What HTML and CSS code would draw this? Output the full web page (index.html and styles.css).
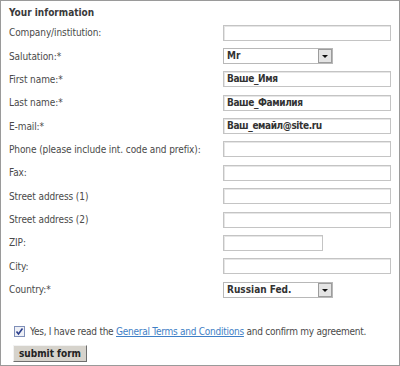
FILE: index.html
```html
<!DOCTYPE html>
<html lang="en">
<head>
    <meta charset="UTF-8">
    <title>Your information</title>
    <link rel="stylesheet" href="styles.css">
</head>
<body>
    <div class="frame">
        <h2>Your information</h2>
        <div class="form">
            <label>Company/institution:</label>
            <span class="field"><span class="box wide"></span></span>

            <label>Salutation:*</label>
            <span class="field"><span class="select">Mr<span class="arrow"></span></span></span>

            <label>First name:*</label>
            <span class="field"><span class="box wide">Ваше_Имя</span></span>

            <label>Last name:*</label>
            <span class="field"><span class="box wide">Ваше_Фамилия</span></span>

            <label>E-mail:*</label>
            <span class="field"><span class="box wide">Ваш_емайл@site.ru</span></span>

            <label>Phone (please include int. code and prefix):</label>
            <span class="field"><span class="box wide"></span></span>

            <label>Fax:</label>
            <span class="field"><span class="box wide"></span></span>

            <label>Street address (1)</label>
            <span class="field"><span class="box wide"></span></span>

            <label>Street address (2)</label>
            <span class="field"><span class="box wide"></span></span>

            <label>ZIP:</label>
            <span class="field"><span class="box short"></span></span>

            <label>City:</label>
            <span class="field"><span class="box wide"></span></span>

            <label>Country:*</label>
            <span class="field"><span class="select">Russian Fed.<span class="arrow"></span></span></span>
        </div>
        <div class="agree">
            <span class="check">
                <svg width="9" height="9" viewBox="0 0 9 9"><path d="M1.5 4.5 L3.5 7 L7.5 1.5" fill="none" stroke="#2c3f8c" stroke-width="1.6"/></svg>
            </span>
            <span>Yes, I have read the <a href="#">General Terms and Conditions</a> and confirm my agreement.</span>
        </div>
        <button class="submit">submit form</button>
    </div>
</body>
</html>
```

FILE: styles.css
```css
/* Page */
body {
    margin: 0;
    background: #ffffff;
    font-family: 'DejaVu Sans Condensed', 'DejaVu Sans', sans-serif;
    font-size: 10px;
    color: #4a4a4a;
}

.frame {
    width: 398px;
    height: 364px;
    border: 1px solid #9a9a9a;
    position: relative;
}

h2 {
    margin: 0;
    padding: 6px 0 0 8px;
    font-size: 10px;
    font-weight: bold;
    color: #3a3a3a;
    height: 14px;
}

/* Form grid */
.form {
    display: grid;
    grid-template-columns: 214px 1fr;
    grid-auto-rows: 23.36px;
    padding: 0 0 0 8px;
}

label {
    display: flex;
    align-items: center;
    letter-spacing: -0.1px;
}

.field {
    display: flex;
    align-items: center;
}

.box {
    height: 14px;
    border: 1px solid #c4c4c4;
    box-shadow: inset 1px 1px 0 #e6e6e6;
    background: #fff;
    font-weight: bold;
    color: #333;
    padding-left: 3px;
    line-height: 14px;
    letter-spacing: -0.4px;
}

.wide {
    width: 163px;
}

.short {
    width: 95px;
}

.select {
    position: relative;
    width: 105px;
    height: 14px;
    border: 1px solid #b8b8b8;
    background: #fff;
    font-weight: bold;
    color: #333;
    padding-left: 3px;
    line-height: 14px;
}

.arrow {
    position: absolute;
    right: 0;
    top: 0;
    width: 12px;
    height: 12px;
    border: 1px solid #9c9c9c;
    background: #e4e4e4;
}

.arrow::after {
    content: '';
    position: absolute;
    left: 3px;
    top: 5px;
    border-left: 3px solid transparent;
    border-right: 3px solid transparent;
    border-top: 3px solid #111;
}

/* Agreement */
.agree {
    display: flex;
    align-items: center;
    margin: 24px 0 0 13px;
    height: 12px;
    white-space: nowrap;
    letter-spacing: -0.25px;
}

.check {
    width: 9px;
    height: 9px;
    border: 1px solid #7f8fb8;
    background: #eef0f6;
    margin-right: 5px;
    display: flex;
}

.agree a {
    color: #3f7fc6;
    text-decoration: underline;
}

.submit {
    display: block;
    margin: 8px 0 0 12px;
    width: 74px;
    height: 17px;
    padding: 0;
    font-family: inherit;
    font-size: 10px;
    font-weight: bold;
    color: #222;
    background: #d6d3cc;
    border: 1px solid;
    border-color: #f2f2f2 #6e6e6e #6e6e6e #f2f2f2;
}
```
